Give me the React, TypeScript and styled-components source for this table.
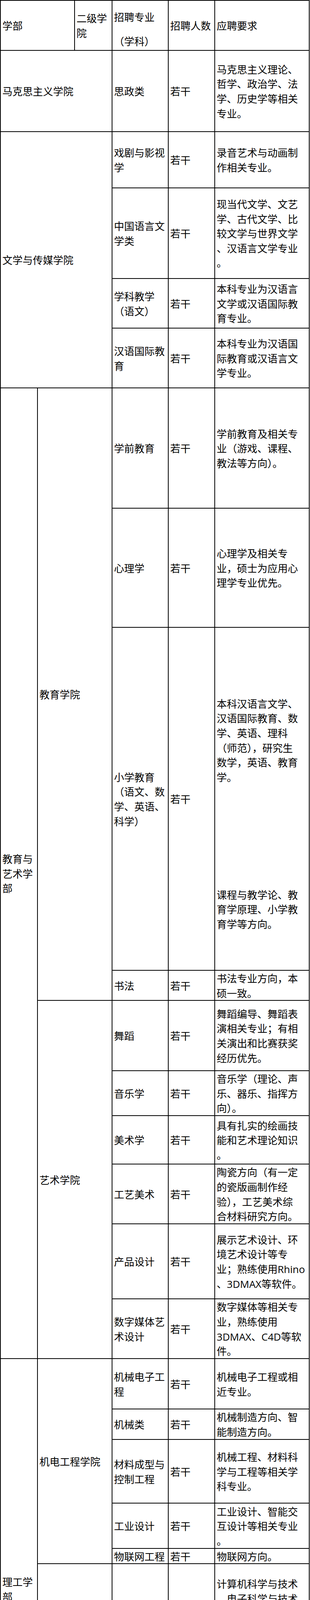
import React from "react";
import styled, { createGlobalStyle } from "styled-components";

type CellDef = { t: string[]; cs?: number; rs?: number };
const C = (t: string[], cs?: number, rs?: number): CellDef => ({ t, cs, rs });
const N = (): CellDef => C(["若干"]);

/* row boundaries (border centres) measured from the reference */
const BOUNDS = [
  1, 128.5, 337, 481, 713, 840, 993, 1301, 1606, 2484, 2561, 2741, 2856, 2980,
  3133, 3325, 3478, 3607, 3685, 3848, 3964, 4003, 4255, 4293, 4424, 4463, 4580,
  4657.5, 4749, 4865, 4965, 5081, 5220, 5334.5, 5449.5, 5526, 5646, 5984.5,
  6137.5, 6395, 6510, 6688, 6955, 7125.6, 7215.6, 7406,
];

const COLS = [95, 95, 96, 144, 119, 242];

const BODY: CellDef[][] = [
  [C(["马克思主义学院"], 3), C(["思政类"]), N(), C(["马克思主义理论、", "哲学、政治学、法", "学、历史学等相关", "专业。"])],
  [C(["文学与传媒学院"], 3, 4), C(["戏剧与影视", "学"]), N(), C(["录音艺术与动画制", "作相关专业。"])],
  [C(["中国语言文", "学类"]), N(), C(["现当代文学、文艺", "学、古代文学、比", "较文学与世界文学", "、汉语言文学专业", "。"])],
  [C(["学科教学", "（语文）"]), N(), C(["本科专业为汉语言", "文学或汉语国际教", "育专业。"])],
  [C(["汉语国际教", "育"]), N(), C(["本科专业为汉语国", "际教育或汉语言文", "学专业。"])],
  [C(["教育与", "艺术学", "部"], 1, 10), C(["教育学院"], 2, 4), C(["学前教育"]), N(), C(["学前教育及相关专", "业（游戏、课程、", "教法等方向）。"])],
  [C(["心理学"]), N(), C(["心理学及相关专", "业，硕士为应用心", "理学专业优先。"])],
  [
    C(["小学教育", "（语文、数", "学、英语、", "科学）"]),
    N(),
    C(["", "", "本科汉语言文学、", "汉语国际教育、数", "学、英语、理科", "（师范），研究生", "数学，英语、教育", "学。", "", "", "", "", "", "", "", "课程与教学论、教", "育学原理、小学教", "育学等方向。"]),
  ],
  [C(["书法"]), N(), C(["书法专业方向，本", "硕一致。"])],
  [C(["艺术学院"], 2, 6), C(["舞蹈"]), N(), C(["舞蹈编导、舞蹈表", "演相关专业；有相", "关演出和比赛获奖", "经历优先。"])],
  [C(["音乐学"]), N(), C(["音乐学（理论、声", "乐、器乐、指挥方", "向）。"])],
  [C(["美术学"]), N(), C(["具有扎实的绘画技", "能和艺术理论知识", "。"])],
  [C(["工艺美术"]), N(), C(["陶瓷方向（有一定", "的瓷版画制作经", "验），工艺美术综", "合材料研究方向。"])],
  [C(["产品设计"]), N(), C(["展示艺术设计、环", "境艺术设计等专", "业；熟练使用Rhino", "、3DMAX等软件。"])],
  [C(["数字媒体艺", "术设计"]), N(), C(["数字媒体等相关专", "业，熟练使用", "3DMAX、C4D等软", "件。"])],
  [C(["理工学", "部"], 1, 11), C(["机电工程学院"], 2, 5), C(["机械电子工", "程"]), N(), C(["机械电子工程或相", "近专业。"])],
  [C(["机械类"]), N(), C(["机械制造方向、智", "能制造方向。"])],
  [C(["材料成型与", "控制工程"]), N(), C(["机械工程、材料科", "学与工程等相关学", "科专业。"])],
  [C(["工业设计"]), N(), C(["工业设计、智能交", "互设计等相关专业", "。"])],
  [C(["物联网工程"]), N(), C(["物联网方向。"])],
  [C(["信息工程学院"], 2, 2), C(["计算机科学", "与技术"]), N(), C(["计算机科学与技术", "、电子科学与技术", "、通信工程、电子", "信息科学与技术等", "相关专业。"])],
  [C(["数学"]), N(), C(["数学类相关专业。"])],
  [C(["土木建筑学院"], 2, 4), C(["城市地下空", "间工程"]), N(), C(["城市地下空间工程", "方向。"])],
  [C(["土木工程"]), N(), C(["土木类专业。"])],
  [C(["工程造价"]), N(), C(["工程造价、工程管", "理专业。"])],
  [C(["建筑学"]), N(), C(["建筑施工、土木工", "程相关专业。"])],
  [C(["经济与", "管理学", "部"], 1, 8), C(["经济学院"], 2, 3), C(["电子商务"]), N(), C(["电子商务相关专业", "。"])],
  [C(["金融工程"]), N(), C(["金融工程专业，具", "有大数据、计算机", "背景。"])],
  [C(["国际经济与", "贸易"]), N(), C(["国际经济与贸易相", "关专业。"])],
  [C(["管理学院"], 2, 5), C(["人力资源管", "理"]), N(), C(["人力资源管理方向", "。"])],
  [C(["物流管理"]), N(), C(["物流管理、物流工", "程等相关专业。"])],
  [C(["市场营销"]), N(), C(["市场营销相关专", "业，本硕专业一致", "或相近。"])],
  [C(["旅游管理"]), N(), C(["旅游管理相关专业", "。"])],
  [C(["国际商务"]), N(), C(["国际商务相关专业", "。"])],
  [C(["公共体育教育中心"], 3), C(["体育"]), N(), C(["体育相关专业、运", "动训练方向。"])],
  [
    C(["外国语学院"], 3, 7),
    C(["学科教学", "（英语）", "（郑州校", "区）"]),
    N(),
    C(["学科教学（英语）", "或英语课程与教学", "论方向；有一年及", "以上中小学一线教", "学经历者优先；有", "教学比赛获奖经验", "者优先；英语专业", "八级；发音标准，", "口语流利。"]),
  ],
  [C(["大学英语"]), N(), C(["英语教育方向，有", "教学经验者优先，", "有科研成果者优先", "。"])],
  [C(["商务英语", "（郑州校", "区）"]), N(), C(["商务英语、国际贸", "易、国际商务等专", "业，有外贸工作经", "验或者商务英语、", "外贸（外语）教学", "经验者优先。"])],
  [C(["英语（郑州", "校区）"]), N(), C(["英语语言文学、外", "国语言学及应用语", "言学。"])],
  [C(["日语（郑州", "校区）"]), N(), C(["日语专业，具有日", "本留学经历或持有", "日语专业八级证书", "。"])],
  [C(["西班牙语", "（郑州校", "区）"]), N(), C(["西班牙语专业八级", "或DeleC1等级以上", "证书，能熟练使用", "西班牙语授课，口", "语流利，发音标", "准，专业基本功扎", "实。"])],
  [C(["葡萄牙语", "（郑州校", "区）"]), N(), C(["葡萄牙语相关专", "业，有相关语言证", "书，有教学经验者", "优先。"])],
  [C(["公共艺术教育教学中心"], 3, 2), C(["音乐学"]), N(), C(["合唱指挥专业、器", "乐专业优先。"])],
  [C(["美术学"]), N(), C(["具有扎实的绘画技", "能和艺术理论知", "识，能够胜任美术", "布展、设计等工作", "。"])],
];

const GlobalStyle = createGlobalStyle`
  html, body {
    margin: 0;
    padding: 0;
    background: #ffffff;
  }
  body {
    font-family: "Noto Sans CJK SC", "Noto Sans", sans-serif;
    color: #000000;
  }
`;

const Table = styled.table`
  border-collapse: collapse;
  table-layout: fixed;
  width: 793px;
  font-size: 26px;
  line-height: 37.6px;
  font-weight: 400;
`;

const Col = styled.col<{ $w: number }>`
  width: ${(p) => p.$w}px;
`;

const Row = styled.tr<{ $h: number }>`
  height: ${(p) => p.$h}px;
`;

const Cell = styled.td`
  border: 2px solid #000000;
  padding: 0 4px;
  vertical-align: middle;
  text-align: left;
  white-space: nowrap;
`;

const HeadCell = styled.th<{ $bottom?: boolean }>`
  border: 2px solid #000000;
  padding: ${(p) => (p.$bottom ? "0 4px 4px" : "0 4px")};
  vertical-align: ${(p) => (p.$bottom ? "bottom" : "middle")};
  text-align: left;
  font-weight: 400;
  white-space: nowrap;
`;

/* text block of a cell; the small negative margin lets the lines touch the
   cell borders the way they do in the source document */
const Stack = styled.div`
  margin: -3px 0;
`;

const Line = styled.div<{ $gap?: number }>`
  height: 37.6px;
  margin-top: ${(p) => p.$gap ?? 0}px;
`;

const Latin = styled.span`
  font-family: "Open Sans", "Noto Sans", sans-serif;
  line-height: 1;
`;

const renderText = (s: string) =>
  s.split(/([A-Za-z0-9]+)/).map((part, i) =>
    /^[A-Za-z0-9]+$/.test(part) ? <Latin key={i}>{part}</Latin> : part
  );

export default function App() {
  const heights = BOUNDS.slice(1).map(
    (b, i) => Math.round(b) - Math.round(BOUNDS[i])
  );
  return (
    <>
      <GlobalStyle />
      <Table>
        <colgroup>
          {COLS.map((w, i) => (
            <Col key={i} $w={w} />
          ))}
        </colgroup>
        <thead>
          <Row $h={heights[0]}>
            <HeadCell colSpan={2}>学部</HeadCell>
            <HeadCell>
              <Line>二级学</Line>
              <Line>院</Line>
            </HeadCell>
            <HeadCell $bottom>
              <Line>招聘专业</Line>
              <Line $gap={25}>（学科）</Line>
            </HeadCell>
            <HeadCell>招聘人数</HeadCell>
            <HeadCell>应聘要求</HeadCell>
          </Row>
        </thead>
        <tbody>
          {BODY.map((row, ri) => (
            <Row key={ri} $h={heights[ri + 1]}>
              {row.map((c, ci) => (
                <Cell key={ci} colSpan={c.cs} rowSpan={c.rs}>
                  <Stack>
                    {c.t.map((l, li) => (
                      <Line key={li}>{l ? renderText(l) : "\u00a0"}</Line>
                    ))}
                  </Stack>
                </Cell>
              ))}
            </Row>
          ))}
        </tbody>
      </Table>
    </>
  );
}
